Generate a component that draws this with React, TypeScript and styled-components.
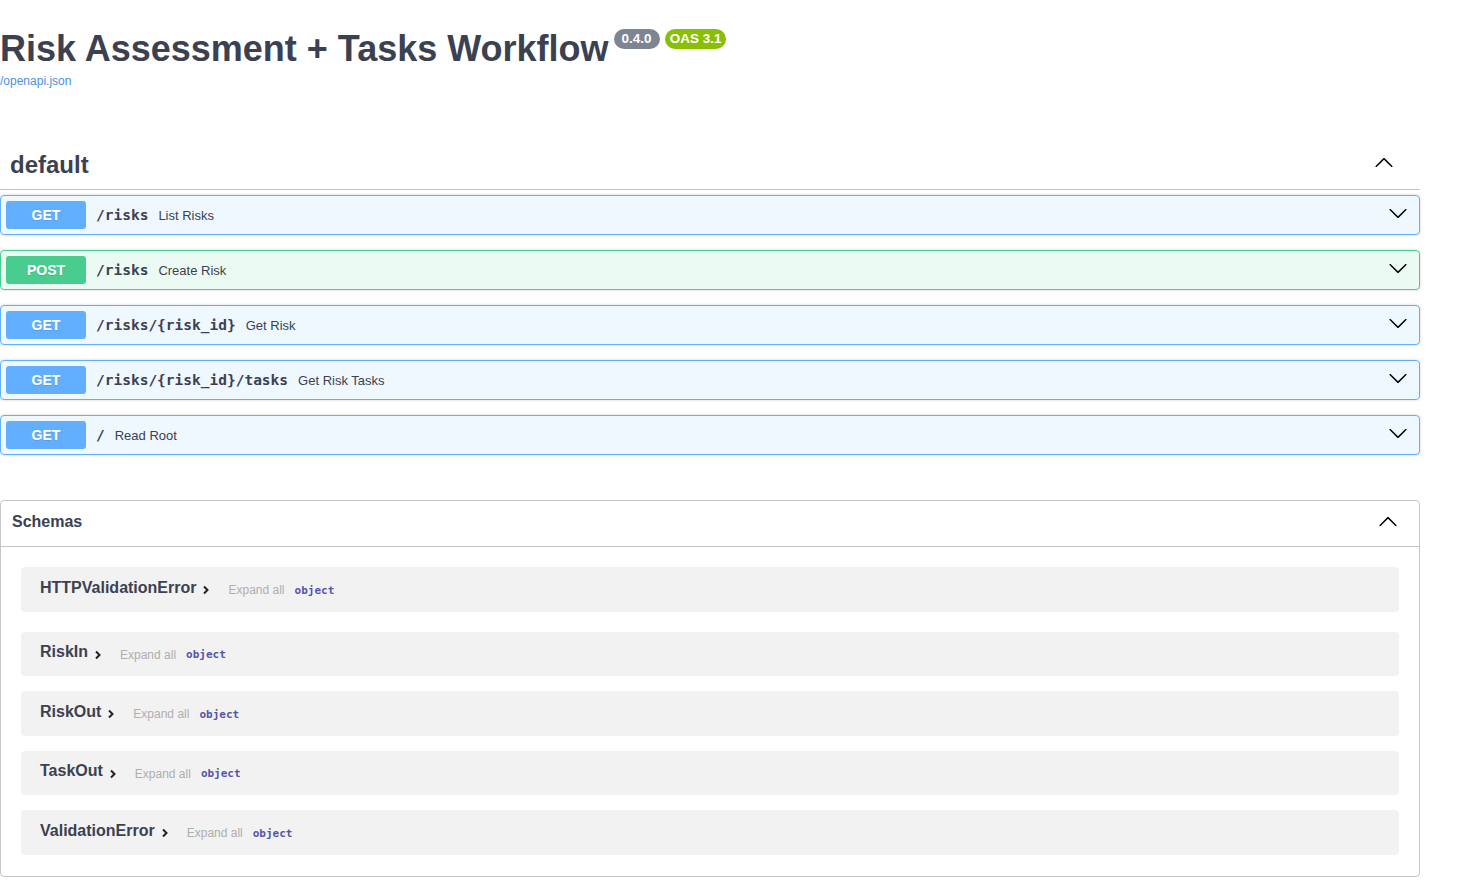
import React from 'react';
import styled, { createGlobalStyle } from 'styled-components';

const GlobalStyle = createGlobalStyle`
  html, body {
    margin: 0;
    padding: 0;
    background: #fff;
  }
  body {
    font-family: 'Liberation Sans', Arial, sans-serif;
    color: #3b4151;
  }
`;

const Page = styled.div`
  width: 1420px;
`;

const Info = styled.div`
  padding-top: 27px;
  margin-bottom: 52px;
`;

const TitleRow = styled.div`
  display: flex;
  align-items: flex-start;
`;

const Title = styled.h2`
  margin: 0;
  font-size: 36px;
  line-height: 43px;
  font-weight: 700;
  color: #3b4151;
`;

const Badge = styled.span<{ $bg: string; $pad: number }>`
  margin: 2px 0 0 5px;
  height: 20px;
  padding: 0 ${(p) => p.$pad}px;
  border-radius: 57px;
  background: ${(p) => p.$bg};
  color: #fff;
  font-size: 13.5px;
  font-weight: 700;
  line-height: 20px;
  white-space: nowrap;
`;

const SpecLink = styled.a`
  display: block;
  margin-top: 4px;
  font-size: 12px;
  line-height: 14px;
  color: #4990e2;
  text-decoration: none;
`;

const TagHeader = styled.div`
  display: flex;
  align-items: center;
  justify-content: space-between;
  padding: 10px 26px 9px 10px;
  margin-bottom: 5px;
  border-bottom: 1px solid rgba(59, 65, 81, 0.3);
`;

const TagTitle = styled.h3`
  margin: 0;
  font-size: 24px;
  line-height: 30px;
  font-weight: 700;
  color: #3b4151;
`;

const methods = {
  GET: { main: '#61affe', bg: 'rgba(97, 175, 254, 0.1)' },
  POST: { main: '#49cc90', bg: 'rgba(73, 204, 144, 0.1)' },
};

type Method = keyof typeof methods;

const OpBlock = styled.div<{ $method: Method }>`
  display: flex;
  align-items: center;
  height: 38px;
  padding: 0 11px 0 5px;
  margin-bottom: 15px;
  border: 1px solid ${(p) => methods[p.$method].main};
  background: ${(p) => methods[p.$method].bg};
  border-radius: 4px;
  box-shadow: 0 0 3px rgba(0, 0, 0, 0.19);
`;

const MethodBadge = styled.span<{ $method: Method }>`
  width: 80px;
  height: 28px;
  flex: none;
  display: flex;
  align-items: center;
  justify-content: center;
  border-radius: 3px;
  background: ${(p) => methods[p.$method].main};
  color: #fff;
  font-size: 14px;
  font-weight: 700;
  text-shadow: 0 1px 0 rgba(0, 0, 0, 0.1);
`;

const OpPath = styled.span`
  margin-left: 10px;
  font-family: 'DejaVu Sans Mono', monospace;
  font-weight: 700;
  font-size: 14.5px;
  color: #3b4151;
`;

const OpSummary = styled.span`
  flex: 1;
  margin-left: 10px;
  font-size: 13px;
  color: #3b4151;
`;

const ArrowIcon = styled.svg<{ $up?: boolean; $shift: number }>`
  flex: none;
  margin-top: ${(p) => p.$shift}px;
  transform: ${(p) => (p.$up ? 'rotate(180deg)' : 'none')};
`;

const Chevron = ({ up, shift = 0 }: { up?: boolean; shift?: number }) => (
  <ArrowIcon $up={up} $shift={shift} width="20" height="20" viewBox="0 0 20 20">
    <path
      fill="#000"
      d="M17.418 6.109c.272-.268.709-.268.979 0s.271.701 0 .969l-7.908 7.83c-.27.268-.707.268-.979 0l-7.908-7.83c-.27-.268-.27-.701 0-.969.271-.268.709-.268.979 0L10 13.25l7.418-7.141z"
    />
  </ArrowIcon>
);

const Models = styled.section`
  margin-top: 45px;
  border: 1px solid rgba(59, 65, 81, 0.3);
  border-radius: 4px;
  margin-bottom: 12px;
`;

const ModelsHeader = styled.div`
  display: flex;
  align-items: center;
  justify-content: space-between;
  height: 45px;
  padding: 0 21px 0 11px;
  border-bottom: 1px solid rgba(59, 65, 81, 0.3);
`;

const ModelsTitle = styled.h4`
  margin: 0;
  font-size: 16px;
  font-weight: 700;
  color: #3b4151;
  margin-top: -3px;
`;

const ModelList = styled.div`
  padding: 20px 20px 21px;
`;

const ModelRow = styled.div<{ $gap: number }>`
  display: flex;
  align-items: center;
  height: 44.5px;
  padding: 0 19px;
  margin-bottom: ${(p) => p.$gap}px;
  background: rgba(0, 0, 0, 0.05);
  border-radius: 4px;
  &:last-child {
    margin-bottom: 0;
  }
`;

const ModelName = styled.span`
  font-size: 16px;
  font-weight: 700;
  color: #3b4151;
  margin-top: -3px;
`;

const Toggle = styled.svg`
  margin: 2px 0 0 6px;
  flex: none;
`;

const ExpandAll = styled.span`
  margin-left: 18px;
  font-size: 12px;
  color: #afaeae;
  margin-top: 2px;
`;

const PropType = styled.span`
  margin-left: 10px;
  margin-top: 2px;
  font-family: 'DejaVu Sans Mono', monospace;
  font-size: 11px;
  font-weight: 700;
  color: #55a;
`;

const ops: { method: Method; path: string; summary: string }[] = [
  { method: 'GET', path: '/risks', summary: 'List Risks' },
  { method: 'POST', path: '/risks', summary: 'Create Risk' },
  { method: 'GET', path: '/risks/{risk_id}', summary: 'Get Risk' },
  { method: 'GET', path: '/risks/{risk_id}/tasks', summary: 'Get Risk Tasks' },
  { method: 'GET', path: '/', summary: 'Read Root' },
];

const schemas = ['HTTPValidationError', 'RiskIn', 'RiskOut', 'TaskOut', 'ValidationError'];

export default function App() {
  return (
    <Page>
      <GlobalStyle />
      <Info>
        <TitleRow>
          <Title>Risk Assessment + Tasks Workflow</Title>
          <Badge $bg="#7d8492" $pad={8}>
            0.4.0
          </Badge>
          <Badge $bg="#89bf04" $pad={5}>
            OAS 3.1
          </Badge>
        </TitleRow>
        <SpecLink href="#">/openapi.json</SpecLink>
      </Info>

      <TagHeader>
        <TagTitle>default</TagTitle>
        <Chevron up shift={-4} />
      </TagHeader>

      {ops.map((op, i) => (
        <OpBlock key={i} $method={op.method}>
          <MethodBadge $method={op.method}>{op.method}</MethodBadge>
          <OpPath>{op.path}</OpPath>
          <OpSummary>{op.summary}</OpSummary>
          <Chevron shift={-5} />
        </OpBlock>
      ))}

      <Models>
        <ModelsHeader>
          <ModelsTitle>Schemas</ModelsTitle>
          <Chevron up shift={-3} />
        </ModelsHeader>
        <ModelList>
          {schemas.map((name, i) => (
            <ModelRow key={name} $gap={i === 0 ? 20 : 15}>
              <ModelName>{name}</ModelName>
              <Toggle width="8" height="10" viewBox="0 0 8 10">
                <path d="M2 1.5 L5.5 5 L2 8.5" fill="none" stroke="#222" strokeWidth="2" />
              </Toggle>
              <ExpandAll>Expand all</ExpandAll>
              <PropType>object</PropType>
            </ModelRow>
          ))}
        </ModelList>
      </Models>
    </Page>
  );
}
